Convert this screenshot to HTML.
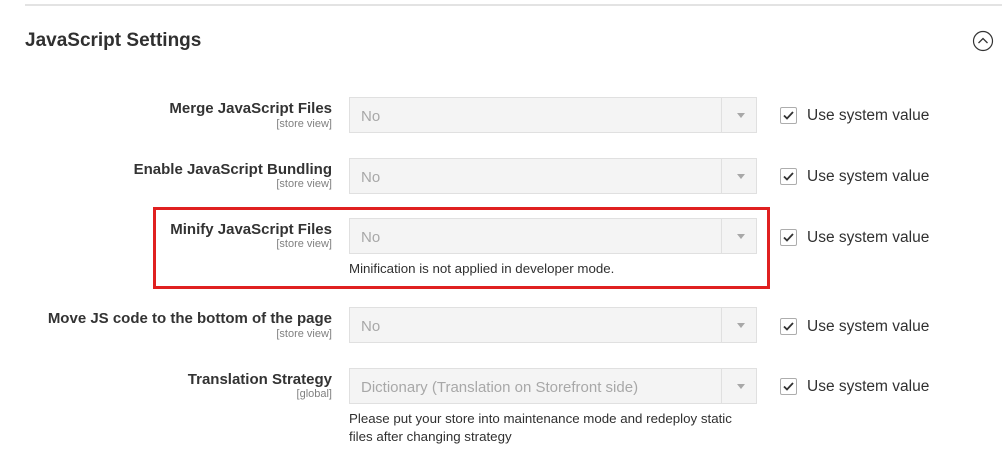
<!DOCTYPE html>
<html><head><meta charset="utf-8"><style>
body{margin:0;width:1002px;height:460px;background:#fff;position:relative;overflow:hidden;font-family:"Liberation Sans",sans-serif;}
.a{position:absolute}
.hr{left:25px;right:0;top:4px;height:2px;background:#e3e3e3}
.title{left:25px;top:30px;font-size:19px;font-weight:bold;color:#303030}
.lbl{right:670px;text-align:right;font-size:15px;font-weight:bold;color:#333;white-space:nowrap}
.sc{right:670px;text-align:right;font-size:11px;color:#808080;white-space:nowrap}
.sel{left:349px;width:408px;height:36px;background:#f4f4f4;border:1px solid #e0e0e0;box-sizing:border-box}
.sel span{position:absolute;left:11px;top:10px;font-size:15px;color:#a8a8a8}
.sel i{position:absolute;left:371px;top:0;bottom:0;width:1px;background:#e0e0e0}
.sel b{position:absolute;left:387px;top:15px;border:4px solid transparent;border-top:5px solid #a8a8a8;border-bottom:0}
.cb{left:780px;width:17px;height:17px;border:1px solid #adadad;border-radius:2px;box-sizing:border-box;background:#fff}
.cb svg{position:absolute;left:1px;top:1px}
.uv{left:807px;font-size:15.5px;color:#303030}
.note{left:349px;font-size:13.3px;color:#303030;line-height:18px}
.red{left:153px;top:207px;width:611px;height:76px;border:3px solid #e02020}
</style></head><body>
<div class="a hr"></div>
<div class="a title">JavaScript Settings</div>
<svg class="a" style="left:972px;top:30px" width="22" height="22"><circle cx="11" cy="11" r="9.5" fill="none" stroke="#333" stroke-width="1.2"/><path d="M6.5 13 L11 8.5 L15.5 13" fill="none" stroke="#333" stroke-width="1.3"/></svg>

<div class="a lbl" style="top:100px">Merge JavaScript Files</div><div class="a sc" style="top:118px">[store view]</div>
<div class="a sel" style="top:97px"><span>No</span><i></i><b></b></div>
<div class="a cb" style="top:107px"><svg width="13" height="13"><path d="M2 6.5 L5 9.5 L11 3" fill="none" stroke="#333" stroke-width="1.8"/></svg></div><div class="a uv" style="top:107px">Use system value</div>

<div class="a lbl" style="top:161px">Enable JavaScript Bundling</div><div class="a sc" style="top:178px">[store view]</div>
<div class="a sel" style="top:158px"><span>No</span><i></i><b></b></div>
<div class="a cb" style="top:168px"><svg width="13" height="13"><path d="M2 6.5 L5 9.5 L11 3" fill="none" stroke="#333" stroke-width="1.8"/></svg></div><div class="a uv" style="top:168px">Use system value</div>

<div class="a red"></div>
<div class="a lbl" style="top:221px">Minify JavaScript Files</div><div class="a sc" style="top:238px">[store view]</div>
<div class="a sel" style="top:218px"><span>No</span><i></i><b></b></div>
<div class="a note" style="top:260px">Minification is not applied in developer mode.</div>
<div class="a cb" style="top:229px"><svg width="13" height="13"><path d="M2 6.5 L5 9.5 L11 3" fill="none" stroke="#333" stroke-width="1.8"/></svg></div><div class="a uv" style="top:229px">Use system value</div>

<div class="a lbl" style="top:310px">Move JS code to the bottom of the page</div><div class="a sc" style="top:328px">[store view]</div>
<div class="a sel" style="top:307px"><span>No</span><i></i><b></b></div>
<div class="a cb" style="top:318px"><svg width="13" height="13"><path d="M2 6.5 L5 9.5 L11 3" fill="none" stroke="#333" stroke-width="1.8"/></svg></div><div class="a uv" style="top:318px">Use system value</div>

<div class="a lbl" style="top:371px">Translation Strategy</div><div class="a sc" style="top:388px">[global]</div>
<div class="a sel" style="top:368px"><span>Dictionary (Translation on Storefront side)</span><i></i><b></b></div>
<div class="a note" style="top:410px">Please put your store into maintenance mode and redeploy static<br>files after changing strategy</div>
<div class="a cb" style="top:378px"><svg width="13" height="13"><path d="M2 6.5 L5 9.5 L11 3" fill="none" stroke="#333" stroke-width="1.8"/></svg></div><div class="a uv" style="top:378px">Use system value</div>
</body></html>
